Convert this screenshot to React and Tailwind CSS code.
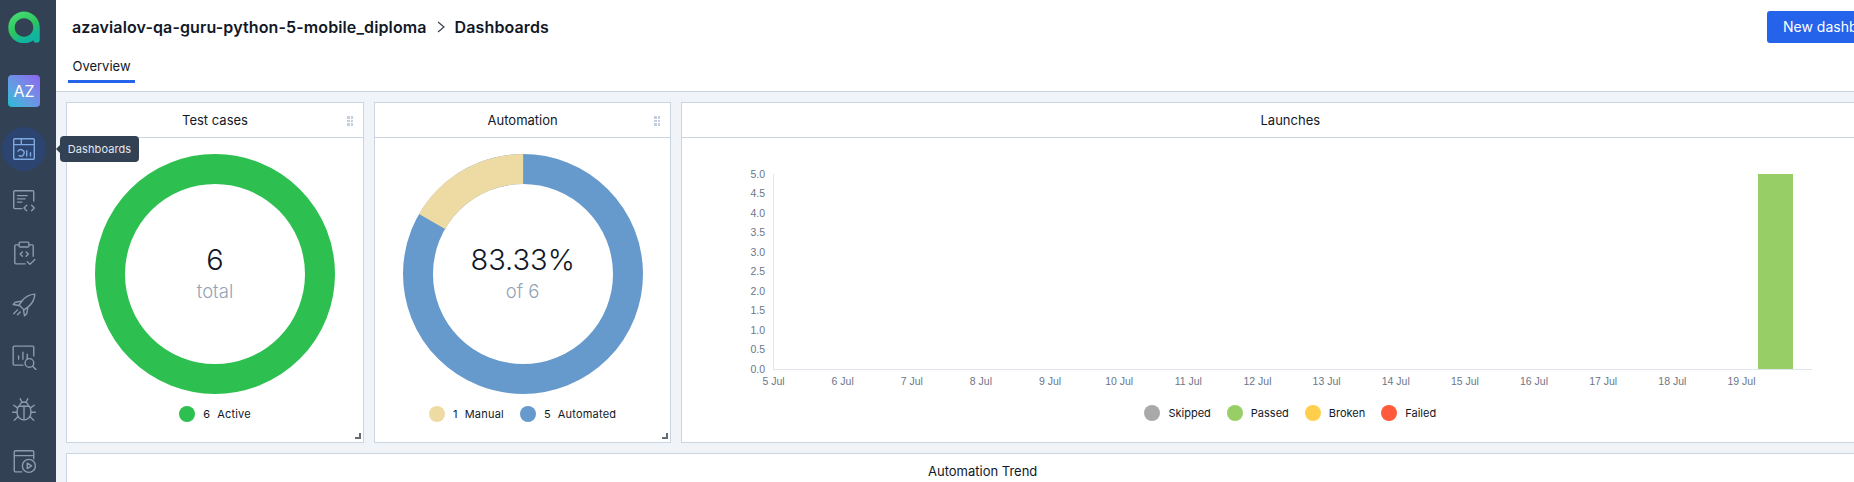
import React from 'react';

const FONT = { fontFamily: 'Inter, "Liberation Sans", sans-serif' };

const navIcons = [
  // dashboards
  <g key="d"><rect x="2.500" y="2.500" width="19" height="19" rx="1" /><path d="M2.500 8h19M9.500 2.500V8M14.500 13.500v5M18 15.500v3" /><path d="M6.500 14a3 3 0 1 1 1 4.200" /></g>,
  // test cases code
  <g key="c"><path d="M21 12V3.500a1 1 0 0 0-1-1H3.500a1 1 0 0 0-1 1V18a1 1 0 0 0 1 1H10" /><path d="M6 7h9M6 10h7M6 13h4M14.500 16l-2.500 2.500 2.500 2.500M19 16l2.500 2.500L19 21" /></g>,
  // test plans
  <g key="p"><path d="M7 4.500H4.500a1 1 0 0 0-1 1V21a1 1 0 0 0 1 1H13M17 4.500h2.500a1 1 0 0 1 1 1V15" /><rect x="7.500" y="2" width="9" height="4.500" rx="1" /><path d="M10.500 11l-2 2 2 2M14 11l2 2-2 2M15 20l2.500 2.500 4.500-4.500" /></g>,
  // launches rocket
  <g key="r"><path d="M22 2c-5 .3-9 2.500-12 6.500L7.500 12l4.500 4.500 3.500-2.500c4-3 6.200-7 6.500-12z" /><path d="M9.500 8.500 4 9.500 2 11.500l5.500 1M15.500 14.500l-1 5.500-2 2-1-5.500M6 16.500 2.500 20M8.500 18.500 6 21" /></g>,
  // analytics
  <g key="a"><path d="M21 11V3a1 1 0 0 0-1-1H3a1 1 0 0 0-1 1v15.500a1 1 0 0 0 1 1h8" /><path d="M7 11v3M11 7.500V14M15 9.500V14" /><circle cx="17" cy="17.500" r="4" /><path d="m20 20.500 3 3" /></g>,
  // defects bug
  <g key="b"><path d="M7 9.500h10c1.200 1.500 1.500 3.500 1.500 5.500 0 4-3 7-6.500 7s-6.500-3-6.500-7c0-2 .3-4 1.500-5.500z" /><path d="M8 9.500a4 4 0 0 1 8 0M12 9.500V22M8.500 2.500 10 5.500M15.500 2.500 14 5.500M5.500 15H1.500M22.500 15h-4M6 11 2.500 8.500M18 11l3.500-2.500M6.500 19 3 22.500M17.500 19l3.500 3.500" /></g>,
  // jobs
  <g key="j"><path d="M21 10V3.500a1 1 0 0 0-1-1H4a1 1 0 0 0-1 1V21a1 1 0 0 0 1 1h6M3 7h18" /><circle cx="16.500" cy="16.500" r="6" /><path d="m15 14 4 2.500-4 2.500z" /></g>,
];

const ticks = ['5', '6', '7', '8', '9', '10', '11', '12', '13', '14', '15', '16', '17', '18', '19'];
const yLabels = ['5.0', '4.5', '4.0', '3.5', '3.0', '2.5', '2.0', '1.5', '1.0', '0.5', '0.0'];

function Sidebar() {
  return (
    <aside className="relative z-10 h-full w-14 shrink-0 bg-[#334155]">
      <div className="flex w-12 flex-col items-center">
        <svg className="mt-[11px] h-8 w-8" viewBox="0 0 32 32" fill="none">
          <defs>
            <linearGradient id="logo" x1="0" y1="0" x2="0.5" y2="1">
              <stop offset="0" stopColor="#45dd72" />
              <stop offset="0.6" stopColor="#2cc45c" />
              <stop offset="1" stopColor="#10b5a0" />
            </linearGradient>
          </defs>
          <path d="M28.500 16.500a12.500 12.500 0 1 0 0 .01zM28.500 16.500V28.500" stroke="url(#logo)" strokeWidth="6.500" strokeLinecap="round" />
        </svg>
        <div className="mt-[32px] flex h-8 w-8 items-center justify-center rounded bg-gradient-to-tr from-[#0bbcd6] to-[#8b63f0] text-base text-white">AZ</div>
        <div className="mt-[20px] flex flex-col gap-2">
          {navIcons.map((icon, i) => (
            <div key={i} className={`flex h-11 w-11 items-center justify-center rounded-full ${i === 0 ? 'bg-[#2c4470] text-[#7ea8e0]' : 'text-[#8c9bb0]'}`}>
              <svg className="h-[26px] w-[26px]" viewBox="0 0 24 24" fill="none" stroke="currentColor" strokeWidth="1.300" strokeLinecap="round" strokeLinejoin="round">
                {icon}
              </svg>
            </div>
          ))}
        </div>
      </div>
      <div className="absolute left-[60px] top-[136px] flex h-[26px] w-[79px] items-center justify-center rounded bg-[#334155] text-[11px] tracking-[0.1px] whitespace-nowrap text-[#e2e8f0]">
        <span className="absolute -left-1 top-[9px] h-0 w-0 border-y-4 border-r-4 border-y-transparent border-r-[#334155]" />
        Dashboards
      </div>
    </aside>
  );
}

function Header() {
  return (
    <header className="flex h-[92px] shrink-0 flex-col border-b border-[#cbd5e1] bg-white pl-3">
      <div className="flex h-[54px] items-center justify-between">
        <div className="flex items-center pl-1 text-base font-semibold tracking-[0.12px] text-[#111827]">
          <span>azavialov-qa-guru-python-5-mobile_diploma</span>
          <svg className="mx-[6px] h-4 w-4 text-[#374151]" viewBox="0 0 16 16" fill="none" stroke="currentColor" strokeWidth="1.200"><path d="m5 3 6 5-6 5" /></svg>
          <span>Dashboards</span>
        </div>
        <button className="mr-[-30px] h-8 w-[117px] rounded-[3px] bg-[#2563eb] pl-4 text-left text-sm whitespace-nowrap text-white">New dashboard</button>
      </div>
      <div className="flex">
        <div className="flex h-[29px] w-[67px] items-start justify-center border-b-[3px] border-[#2563eb] pt-[3px] text-[13px] text-[#111827]">Overview</div>
      </div>
    </header>
  );
}

function Card({ title, handles = true, children }) {
  return (
    <div className="relative h-[341px] border border-[#cbd5e1] bg-white">
      <div className="relative flex h-[35px] items-center justify-center border-b border-[#cbd5e1] pt-[2px] text-[13px] text-[#111827]">
        {title}
        {handles && (
          <div className="absolute right-[10px] top-[13px] grid grid-cols-2 gap-px">
            {[0, 1, 2, 3, 4, 5].map((n) => <span key={n} className="h-[2.500px] w-[2.500px] bg-[#c3cfe0]" />)}
          </div>
        )}
      </div>
      {children}
      {handles && <span className="absolute bottom-[3px] right-[2px] h-[6px] w-[6px] border-b-2 border-r-2 border-[#666c75]" />}
    </div>
  );
}

function Donut({ main, sub, manual, legend }) {
  const r = 105;
  const len = 2 * Math.PI * r;
  return (
    <div className="flex flex-col items-center pt-4">
      <div className="relative h-60 w-60">
        <svg className="h-60 w-60" viewBox="0 0 240 240" fill="none">
          <circle cx="120" cy="120" r={r} stroke={manual ? '#6699cc' : '#2dbf50'} strokeWidth="30" />
          {manual && (
            <circle cx="120" cy="120" r={r} stroke="#eedba4" strokeWidth="30" strokeDasharray={`${len / 6} ${len}`} transform="rotate(-150 120 120)" />
          )}
        </svg>
        <div className="absolute inset-0 flex flex-col items-center justify-center">
          <div className="-mt-px text-[29px] leading-8 font-light text-[#111827]">{main}</div>
          <div className="mt-[3px] text-[18.500px] leading-6 font-light text-[#94a3b8]">{sub}</div>
        </div>
      </div>
      <div className="mt-[12px] flex h-4 items-center gap-4 text-[11px] tracking-[0.2px] text-[#111827]">
        {legend.map((l) => (
          <div key={l.label} className="flex items-center">
            <span className={`mr-2 h-4 w-4 rounded-full ${l.dot}`} />
            <span className="mr-[7px]">{l.value}</span>
            <span>{l.label}</span>
          </div>
        ))}
      </div>
    </div>
  );
}

function LaunchesChart() {
  return (
    <div>
      <svg className="block h-[267px] w-[1216px]" viewBox="0 0 1216 267" style={{ fontFamily: '"Liberation Sans", sans-serif' }}>
        <path d="M91.500 36v195.500H1130" fill="none" stroke="#e2e5ec" />
        {yLabels.map((l, i) => (
          <text key={l} x="83" y={39.5 + i * 19.5} textAnchor="end" fontSize="10.500" fill="#6b7689">{l}</text>
        ))}
        {ticks.map((t, i) => (
          <text key={t} x={91.5 + i * 69.14} y="247" textAnchor="middle" fontSize="10.500" fill="#6b7689">{t} Jul</text>
        ))}
        <rect x="1076" y="36" width="35" height="195" fill="#98ce66" />
      </svg>
      <div className="flex h-4 items-center justify-center gap-4 text-[11px] text-[#111827]">
        {[['Skipped', 'bg-[#a9a9a9]'], ['Passed', 'bg-[#98ce66]'], ['Broken', 'bg-[#ffce4d]'], ['Failed', 'bg-[#ff5a3c]']].map(([label, dot]) => (
          <div key={label} className="flex items-center">
            <span className={`mr-2 h-4 w-4 rounded-full ${dot}`} />
            {label}
          </div>
        ))}
      </div>
    </div>
  );
}

export default function App() {
  return (
    <div className="flex h-screen w-full overflow-hidden bg-[#f0f4f9]" style={FONT}>
      <Sidebar />
      <main className="flex min-w-0 flex-1 flex-col">
        <Header />
        <div className="w-[1854px] p-[10px]">
          <div className="grid grid-cols-[298px_297.300px_1218px] gap-[10px]">
            <Card title="Test cases">
              <Donut main="6" sub="total" legend={[{ label: 'Active', value: 6, dot: 'bg-[#2dbf50]' }]} />
            </Card>
            <Card title="Automation">
              <Donut
                main="83.33%"
                sub="of 6"
                manual
                legend={[
                  { label: 'Manual', value: 1, dot: 'bg-[#eedba4]' },
                  { label: 'Automated', value: 5, dot: 'bg-[#6699cc]' },
                ]}
              />
            </Card>
            <Card title="Launches" handles={false}>
              <LaunchesChart />
            </Card>
            <div className="col-span-3">
              <Card title="Automation Trend" handles={false} />
            </div>
          </div>
        </div>
      </main>
    </div>
  );
}
